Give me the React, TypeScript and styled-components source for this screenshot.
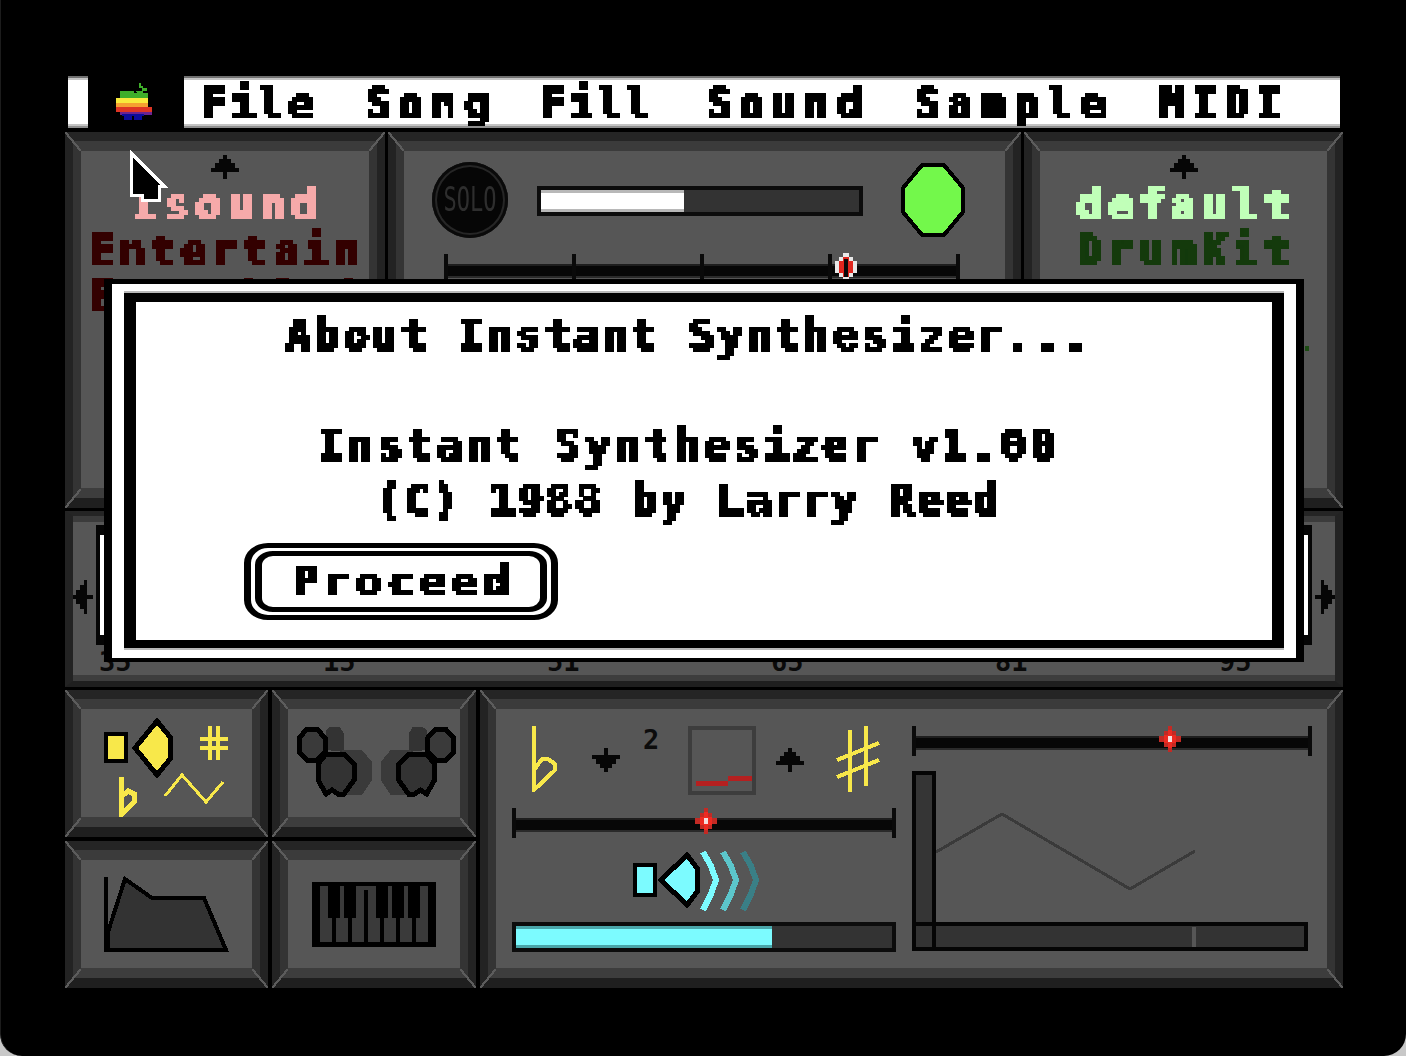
import React from "react";
import styled, { createGlobalStyle, css } from "styled-components";

const GlobalStyle = createGlobalStyle`
  html, body {
    margin: 0;
    padding: 0;
    background: #c8c8c8;
  }
  * { box-sizing: border-box; }
`;

const pixelFont = css`
  font-family: "DejaVu Sans Mono", "Liberation Mono", monospace;
  font-weight: 700;
  font-size: 42px;
  white-space: pre;
  filter: url(#chunky);
`;

const Screen = styled.div`
  position: relative;
  width: 1406px;
  height: 1056px;
  overflow: hidden;
  background: #000;
  border-left: 1px solid #1c1c1c;
  border-radius: 0 0 22px 22px;
  padding: 76px 63px 0 64px;
`;

const MenuBar = styled.div`
  display: flex;
  height: 52px;
  margin: 0 3px 4px;
`;

const MenuEdge = styled.div`
  background: #fff;
  border-top: 2px solid #707070;
  border-bottom: 2px solid #909090;
  box-shadow: inset 0 2px #c4c4c4, inset 0 -2px #c4c4c4;
`;

const MenuStub = styled(MenuEdge)`
  width: 20px;
`;

const AppleSlot = styled.div`
  width: 96px;
  display: flex;
  align-items: center;
  justify-content: center;
  padding-right: 4px;
  background: #000;
`;

const MenuItems = styled(MenuEdge)`
  flex: 1;
  display: flex;
  align-items: center;
  padding: 3px 0 0 17px;
`;

const MenuItem = styled.span<{ $ls: number; $w: number }>`
  ${pixelFont}
  flex: none;
  width: ${({ $w }) => $w}px;
  color: #000;
  line-height: 46px;
  letter-spacing: ${({ $ls }) => $ls}px;
`;

const TopRow = styled.div`
  display: grid;
  grid-template-columns: 320px 633px 319px;
  column-gap: 3px;
  height: 376px;
`;

const StripRow = styled.div`
  display: flex;
  height: 176px;
  margin-top: 3px;
`;

const BottomRow = styled.div`
  display: grid;
  grid-template-columns: 203px 204px 1fr;
  grid-template-rows: 147px 147px;
  column-gap: 4px;
  row-gap: 4px;
  height: 298px;
  margin-top: 3px;
`;

const Panel = styled.div<{ $strip?: boolean; $tall?: boolean }>`
  position: relative;
  display: flex;
  flex: 1;
  min-width: 0;
  border-style: solid;
  border-width: ${({ $strip }) => ($strip ? "5px 8px 6px" : "9px 8px 10px")};
  border-color: #252525 #232323 #1f1f1f #232323;
  ${({ $tall }) => $tall && "grid-row: 1 / span 2; grid-column: 3;"}
  ${({ $strip }) =>
    !$strip &&
    css`
      &::after {
        content: "";
        position: absolute;
        inset: -9px -8px -10px;
        pointer-events: none;
        background-repeat: no-repeat;
        background-size: 16px 19px;
        background-position: left top, right top, left bottom, right bottom;
        background-image:
          linear-gradient(to top right, transparent calc(50% - 1.1px), #5c5c5c calc(50% - 1.1px) calc(50% + 1.1px), transparent calc(50% + 1.1px)),
          linear-gradient(to top left, transparent calc(50% - 1.1px), #5c5c5c calc(50% - 1.1px) calc(50% + 1.1px), transparent calc(50% + 1.1px)),
          linear-gradient(to top left, transparent calc(50% - 1.1px), #5c5c5c calc(50% - 1.1px) calc(50% + 1.1px), transparent calc(50% + 1.1px)),
          linear-gradient(to top right, transparent calc(50% - 1.1px), #5c5c5c calc(50% - 1.1px) calc(50% + 1.1px), transparent calc(50% + 1.1px));
      }
    `}
`;

const Face = styled.div<{ $strip?: boolean }>`
  flex: 1;
  min-width: 0;
  background: #565656;
  border-style: solid;
  border-width: ${({ $strip }) => ($strip ? "6px 0 6px" : "10px 8px")};
  border-color: #3b3b3b #343434 #3d3d3d #343434;
`;

const ListFace = styled(Face)`
  display: flex;
  flex-direction: column;
  align-items: center;
  padding-top: 4px;
`;

const ListLine = styled.div<{ $color: string; $ls: number }>`
  ${pixelFont}
  color: ${({ $color }) => $color};
  letter-spacing: ${({ $ls }) => $ls}px;
  line-height: 46px;
  height: 46px;
`;

const ListLines = styled.div`
  margin: 3px 0 0 5px;
  display: flex;
  flex-direction: column;
  align-items: center;
`;

const Speck = styled.div`
  position: absolute;
  left: 1304px;
  top: 346px;
  width: 4px;
  height: 5px;
  background: #1b4a12;
`;

const TransportRow = styled.div`
  display: flex;
  align-items: center;
  padding: 11px 0 0 28px;
`;

const SoloButton = styled.div`
  flex: none;
  width: 76px;
  height: 76px;
  display: flex;
  align-items: center;
  justify-content: center;
  border-radius: 50%;
  background: #060606;
  box-shadow: inset 0 0 0 3px #0a0a0a, inset 0 0 0 5px #262626;
`;

const SoloLabel = styled.span`
  font-family: "DejaVu Sans Mono", monospace;
  font-size: 22px;
  line-height: 22px;
  color: #2e2e2e;
  transform: scaleY(1.5);
`;

const ProgressBar = styled.div<{ $w: number; $ml?: number; $mt?: number }>`
  width: ${({ $w }) => $w}px;
  height: 30px;
  margin-left: ${({ $ml }) => $ml ?? 0}px;
  margin-top: ${({ $mt }) => $mt ?? 0}px;
  border: 4px solid #0c0c0c;
  background: #333;
  overflow: hidden;
`;

const ProgressFill = styled.div<{ $color: string; $edge: string }>`
  height: 100%;
  background: ${({ $color }) => $color};
  box-shadow: inset 0 3px ${({ $edge }) => $edge}, inset 0 -3px ${({ $edge }) => $edge};
`;

const GoLight = styled.svg`
  display: block;
  margin-left: 37px;
`;

const SliderRoot = styled.div<{ $w: number; $ml?: number; $mt?: number }>`
  position: relative;
  display: flex;
  justify-content: space-between;
  width: ${({ $w }) => $w}px;
  height: 30px;
  margin-left: ${({ $ml }) => $ml ?? 0}px;
  margin-top: ${({ $mt }) => $mt ?? 0}px;
  &::before {
    content: "";
    position: absolute;
    left: 0;
    right: 0;
    top: 10px;
    height: 10px;
    background: #070707;
    border-top: 2px solid #1e1e1e;
    border-bottom: 2px solid #2a2a2a;
  }
`;

const SliderTick = styled.span`
  position: relative;
  width: 4px;
  background: #0a0a0a;
`;

const SliderThumb = styled.svg<{ $x: number }>`
  position: absolute;
  left: ${({ $x }) => $x}px;
  top: -2px;
`;

const StripFace = styled(Face)`
  display: flex;
  align-items: flex-start;
`;

const StripArrow = styled.div<{ $ml: number }>`
  margin: 58px 0 0 ${({ $ml }) => $ml}px;
  line-height: 0;
`;

const StripMiddle = styled.div`
  width: 1216px;
  margin: 3px 0 0 3px;
`;

const KeyFrame = styled.div`
  height: 120px;
  background: #fff;
  border: solid #050505;
  border-width: 10px 4px;
`;

const ScaleRow = styled.div`
  display: grid;
  grid-template-columns: repeat(6, 224px);
  padding: 4px 0 0 3px;
`;

const ScaleNum = styled.span`
  font-family: "DejaVu Sans Mono", monospace;
  font-weight: 700;
  font-size: 27px;
  line-height: 26px;
  color: #0a0a0a;
`;

const IconFace = styled(Face)`
  display: flex;
  align-items: center;
  justify-content: center;
`;

const ControlFace = styled(Face)`
  display: grid;
  grid-template-columns: 384px 400px;
  column-gap: 16px;
  padding: 17px 0 0 16px;
`;

const LeftColumn = styled.div`
  display: flex;
  flex-direction: column;
`;

const RightColumn = styled.div`
  display: flex;
  flex-direction: column;
`;

const PitchRow = styled.div`
  display: flex;
  align-items: flex-start;
  height: 70px;
`;

const PitchItem = styled.div<{ $ml: number; $mt?: number }>`
  margin-left: ${({ $ml }) => $ml}px;
  margin-top: ${({ $mt }) => $mt ?? 0}px;
  line-height: 0;
`;

const OctaveNum = styled.span`
  display: block;
  width: 14px;
  font-family: "DejaVu Sans Mono", monospace;
  font-weight: 700;
  font-size: 27px;
  line-height: 27px;
  color: #0c0c0c;
`;

const PitchBox = styled.div`
  display: flex;
  align-items: flex-end;
  width: 68px;
  height: 69px;
  padding: 0 0 5px 4px;
  border: 4px solid #3d3d3d;
`;

const PitchStep = styled.span<{ $w: number; $mb: number }>`
  width: ${({ $w }) => $w}px;
  height: 5px;
  margin-bottom: ${({ $mb }) => $mb}px;
  background: #b52020;
`;

const VolumeRow = styled.div`
  display: flex;
  margin: 12px 0 0 118px;
  height: 62px;
`;

const EnvelopeGraph = styled.svg`
  display: block;
  margin-top: 15px;
`;

const Dialog = styled.div`
  position: absolute;
  left: 103px;
  top: 279px;
  width: 1200px;
  height: 383px;
  background: #fff;
  border: solid #000;
  border-width: 5px 8px 4px;
  padding: 9px 12px 10px;
`;

const DialogInner = styled.div`
  height: 100%;
  background: #fff;
  border: solid #000;
  border-width: 9px 12px 8px;
  box-shadow: 0 -2px #b8b8b8, 0 2px #b8b8b8;
  display: flex;
  flex-direction: column;
  align-items: center;
  padding: 9px 30px 0 0;
`;

const DialogLine = styled.div<{ $ls: number; $mt?: number }>`
  ${pixelFont}
  color: #000;
  height: 50px;
  line-height: 50px;
  letter-spacing: ${({ $ls }) => $ls}px;
  margin-top: ${({ $mt }) => $mt ?? 0}px;
`;

const ProceedButton = styled.button`
  position: relative;
  align-self: flex-start;
  width: 314px;
  height: 77px;
  margin: 17px 0 0 108px;
  padding: 0;
  background: #fff;
  border: solid #000;
  border-width: 5px 7px;
  border-radius: 24px / 20px;
  display: flex;
  align-items: center;
  justify-content: center;
  &::before {
    content: "";
    position: absolute;
    inset: 3px 4px;
    border: solid #000;
    border-width: 5px 7px;
    border-radius: 18px / 14px;
  }
`;

const ProceedLabel = styled.span`
  ${pixelFont}
  color: #000;
  letter-spacing: 6.5px;
  line-height: 48px;
  margin-left: 6px;
`;

const Pointer = styled.svg`
  position: absolute;
  left: 124px;
  top: 148px;
`;

const ChunkyDefs = styled.svg`
  position: absolute;
  width: 0;
  height: 0;
`;

function Spade({ dir, w, h }: { dir: "up" | "down" | "left" | "right"; w: number; h: number }) {
  const side = dir === "left" || dir === "right";
  const t = { up: "", down: "translate(28 24) rotate(180)", right: "translate(24 0) rotate(90)", left: "translate(0 28) rotate(-90)" }[dir];
  return (
    <svg width={w} height={h} viewBox={side ? "0 0 24 28" : "0 0 28 24"} preserveAspectRatio="none" shapeRendering="crispEdges">
      <path transform={t} fill="#060606" d="M12 0h4v4h4v4h4v5h4v4H16v7h-4v-7H0v-4h4V8h4V4h4z" />
    </svg>
  );
}

function AppleLogo() {
  const rows: [number, number, number, number, string][] = [
    [120, 90, 14, 2, "#3fae2a"],
    [120, 92, 28, 5, "#3fae2a"],
    [116, 97, 32, 5, "#f8ea3c"],
    [116, 102, 32, 4, "#f6a030"],
    [116, 106, 36, 5, "#de3524"],
    [120, 111, 32, 3, "#6a2390"],
    [122, 113, 22, 2, "#0c0c9a"],
    [124, 114, 8, 5, "#0c0c9a"],
    [134, 114, 8, 5, "#0c0c9a"],
  ];
  return (
    <svg width={40} height={40} viewBox="114 81 40 40" shapeRendering="crispEdges">
      <path d="M136 90h6v-3h-3v-5h2v3h2v2h4v3h-4v3h-5z" fill="#3fae2a" />
      {rows.map(([x, y, w, h, c], i) => (
        <rect key={i} x={x} y={y} width={w} height={h} fill={c} />
      ))}
    </svg>
  );
}

function Thumb({ white }: { white?: boolean }) {
  if (white) {
    return (
      <g shapeRendering="crispEdges">
        <path d="M8 1h6v4h4v4h4v12h-4v4h-4v2H8v-2H4v-4H0V9h4V5h4z" fill="#e8e8e8" />
        <path d="M8 5h6v4h4v12h-4v4H8v-4H4V9h4z" fill="#e0261e" />
        <rect x="9" y="7" width="4" height="18" fill="#0a0a0a" />
      </g>
    );
  }
  return (
    <g shapeRendering="crispEdges">
      <path d="M9 2h4v5h4v5h5v6h-5v5h-4v5H9v-5H5v-5H0v-6h5V7h4z" fill="#c32a24" />
      <path d="M9 6h4v5h4v8h-4v5H9v-5H5v-8h4z" fill="#ee2a22" />
      <rect x="9" y="12" width="4" height="6" fill="#f6dcdc" />
    </g>
  );
}

function Slider({ w, ml, mt, ticks, x, white }: { w: number; ml?: number; mt?: number; ticks: number; x: number; white?: boolean }) {
  return (
    <SliderRoot $w={w} $ml={ml} $mt={mt}>
      {Array.from({ length: ticks }).map((_, i) => (
        <SliderTick key={i} />
      ))}
      <SliderThumb $x={x} width={22} height={30} viewBox="0 0 22 30">
        <Thumb white={white} />
      </SliderThumb>
    </SliderRoot>
  );
}

function Speaker({ fill }: { fill: string }) {
  return (
    <svg width={132} height={62} viewBox="630 850 132 62" shapeRendering="crispEdges">
      <rect x="635" y="865" width="20" height="30" fill={fill} stroke="#000" strokeWidth="4" />
      <path d="M661 880 L687 855 L697 868 V892 L687 905 Z" fill={fill} stroke="#000" strokeWidth="5" />
      <g fill="none" strokeWidth="6">
        <path d="M703 852L711 866L716 880L711 894L703 910" stroke="#7cfbff" />
        <path d="M723 852L731 866L736 880L731 894L723 910" stroke="#5cc6cb" />
        <path d="M743 852L751 866L756 880L751 894L743 910" stroke="#3a7f86" />
      </g>
    </svg>
  );
}

function WaveIcon() {
  const y = "#f8e84a";
  return (
    <svg width={171} height={108} viewBox="81 709 171 108" shapeRendering="crispEdges">
      <rect x="106" y="734" width="20" height="27" fill={y} stroke="#000" strokeWidth="4" />
      <path d="M135 748 L157 721 L170 737 V759 L157 775 Z" fill={y} stroke="#000" strokeWidth="5" />
      <g stroke={y} strokeWidth="4" fill="none">
        <path d="M210 726V760M218 726V760M200 739H228M200 748H228" />
        <path d="M121 777V815L134 802V794L128 791L121 797" strokeWidth="5" />
        <path d="M165 796L182 775L206 802L223 782" strokeWidth="3" />
      </g>
    </svg>
  );
}

function HandsIcon() {
  const hand = (
    <>
      <path d="M326 750V730L330 727H340L344 734V752Z" fill="#333" />
      <path d="M342 750H362L372 762V780L362 795H335Z" fill="#3a3a3a" />
      <path d="M299 738L307 729H317L325 738V752L317 760H307L299 752Z" fill="#3a3a3a" stroke="#000" strokeWidth="5" />
      <path d="M326 754H344L354 764V780L344 794H338L332 790L326 794L318 780V764Z" fill="#333" stroke="#000" strokeWidth="5" />
    </>
  );
  return (
    <svg width={172} height={108} viewBox="288 709 172 108" shapeRendering="crispEdges">
      {hand}
      <g transform="translate(752.6 0) scale(-1 1)">{hand}</g>
    </svg>
  );
}

function EnvelopeIcon() {
  return (
    <svg width={171} height={108} viewBox="81 860 171 108" shapeRendering="crispEdges">
      <path d="M108 950V932L125 879L152 898H204L226 950Z" fill="#333" stroke="#000" strokeWidth="4" />
      <rect x="104" y="877" width="4" height="75" fill="#000" />
      <rect x="104" y="948" width="124" height="4" fill="#000" />
    </svg>
  );
}

function KeyboardIcon() {
  const keys = [320, 336, 352, 368, 384, 400, 416];
  const blacks = [328, 344, 376, 392, 408];
  return (
    <svg width={172} height={108} viewBox="288 860 172 108" shapeRendering="crispEdges">
      <rect x="312" y="882" width="124" height="65" fill="#000" />
      {keys.map((x) => (
        <rect key={x} x={x} y="886" width="12" height="56" fill="#3a3a3a" />
      ))}
      <rect x="332" y="886" width="96" height="4" fill="#3a3a3a" />
      {blacks.map((x) => (
        <rect key={x} x={x} y="886" width="12" height="32" fill="#000" />
      ))}
    </svg>
  );
}

function Flat() {
  return (
    <svg width={25} height={66} viewBox="0 0 25 66">
      <path d="M2 0V64L23 44V38L16 33H10L2 44" fill="none" stroke="#f8e84a" strokeWidth="4" shapeRendering="crispEdges" />
    </svg>
  );
}

function Sharp() {
  return (
    <svg width={44} height={66} viewBox="836 726 44 66" shapeRendering="crispEdges">
      <path d="M850 730V792M866 726V786M837 760L879 743M837 777L879 760" fill="none" stroke="#f8e84a" strokeWidth="4" />
    </svg>
  );
}

function EnvelopeChart() {
  return (
    <EnvelopeGraph width={400} height={181} viewBox="912 772 400 181" shapeRendering="crispEdges">
      <path d="M936 853L1002 815L1130 890L1195 852" fill="none" stroke="#3a3a3a" strokeWidth="3" />
      <rect x="914" y="774" width="20" height="176" fill="#353535" stroke="#050505" strokeWidth="4" />
      <rect x="914" y="925" width="392" height="25" fill="#333" stroke="#050505" strokeWidth="4" />
      <path d="M934 925V950" stroke="#050505" strokeWidth="4" />
      <rect x="1192" y="928" width="4" height="20" fill="#565656" />
    </EnvelopeGraph>
  );
}

const menu = [
  { label: "File", ls: 3.7, w: 164 },
  { label: "Song", ls: 8, w: 175 },
  { label: "Fill", ls: 3.3, w: 166 },
  { label: "Sound", ls: 7.5, w: 208 },
  { label: "Sample", ls: 8, w: 246 },
  { label: "MIDI", ls: 7, w: 130 },
];

const scale = ["35", "15", "51", "65", "81", "95"];

export default function App() {
  return (
    <>
      <GlobalStyle />
      <ChunkyDefs aria-hidden="true">
        <defs>
          <filter id="chunky" x="-5%" y="-10%" width="110%" height="120%" colorInterpolationFilters="sRGB">
            <feMorphology in="SourceGraphic" operator="dilate" radius="1 0" result="fat" />
            <feComponentTransfer in="fat" result="hard">
              <feFuncA type="discrete" tableValues="0 1" />
            </feComponentTransfer>
            <feFlood x="1" y="2" width="1" height="1" floodColor="#000" />
            <feComposite width="4" height="4" />
            <feTile result="grid" />
            <feComposite in="hard" in2="grid" operator="in" />
            <feMorphology operator="dilate" radius="2 2" />
            <feGaussianBlur stdDeviation="0 0.5" />
          </filter>
        </defs>
      </ChunkyDefs>
      <Screen>
        <MenuBar>
          <MenuStub />
          <AppleSlot>
            <AppleLogo />
          </AppleSlot>
          <MenuItems>
            {menu.map((m) => (
              <MenuItem key={m.label} $ls={m.ls} $w={m.w}>
                {m.label}
              </MenuItem>
            ))}
          </MenuItems>
        </MenuBar>

        <TopRow>
          <Panel>
            <ListFace>
              <Spade dir="up" w={28} h={24} />
              <ListLines>
                <ListLine $color="#f6aaaa" $ls={6.7}>Isound</ListLine>
                <ListLine $color="#330000" $ls={5.5}>Entertain</ListLine>
                <ListLine $color="#330000" $ls={5.5}>Ensemble1</ListLine>
              </ListLines>
            </ListFace>
          </Panel>
          <Panel>
            <Face>
              <TransportRow>
                <SoloButton>
                  <SoloLabel>SOLO</SoloLabel>
                </SoloButton>
                <ProgressBar $w={326} $ml={29} $mt={2}>
                  <ProgressFill $color="#fff" $edge="#b8b8b8" style={{ width: "45%" }} />
                </ProgressBar>
                <GoLight width={66} height={76} viewBox="0 0 66 76" shapeRendering="crispEdges">
                  <path d="M22 3H44L63 26V50L44 73H22L3 50V26Z" fill="#73f84b" stroke="#000" strokeWidth="4" />
                </GoLight>
              </TransportRow>
              <Slider w={516} ml={40} mt={16} ticks={5} x={391} white />
            </Face>
          </Panel>
          <Panel>
            <ListFace>
              <Spade dir="up" w={28} h={24} />
              <ListLines>
                <ListLine $color="#c0ffb8" $ls={5.9}>default</ListLine>
                <ListLine $color="#143a0c" $ls={5.9}>DrumKit</ListLine>
              </ListLines>
            </ListFace>
          </Panel>
        </TopRow>

        <StripRow>
          <Panel $strip>
            <StripFace $strip>
              <StripArrow $ml={0}>
                <Spade dir="left" w={20} h={34} />
              </StripArrow>
              <StripMiddle>
                <KeyFrame />
                <ScaleRow>
                  {scale.map((n) => (
                    <ScaleNum key={n}>{n}</ScaleNum>
                  ))}
                </ScaleRow>
              </StripMiddle>
              <StripArrow $ml={3}>
                <Spade dir="right" w={20} h={34} />
              </StripArrow>
            </StripFace>
          </Panel>
        </StripRow>

        <BottomRow>
          <Panel>
            <IconFace>
              <WaveIcon />
            </IconFace>
          </Panel>
          <Panel>
            <IconFace>
              <HandsIcon />
            </IconFace>
          </Panel>
          <Panel $tall>
            <ControlFace>
              <LeftColumn>
                <PitchRow>
                  <PitchItem $ml={20}>
                    <Flat />
                  </PitchItem>
                  <PitchItem $ml={35} $mt={22}>
                    <Spade dir="down" w={28} h={24} />
                  </PitchItem>
                  <PitchItem $ml={23}>
                    <OctaveNum>2</OctaveNum>
                  </PitchItem>
                  <PitchItem $ml={31}>
                    <PitchBox>
                      <PitchStep $w={32} $mb={0} />
                      <PitchStep $w={24} $mb={5} />
                    </PitchBox>
                  </PitchItem>
                  <PitchItem $ml={20} $mt={22}>
                    <Spade dir="up" w={28} h={24} />
                  </PitchItem>
                  <PitchItem $ml={32}>
                    <Sharp />
                  </PitchItem>
                </PitchRow>
                <Slider w={384} mt={12} ticks={2} x={183} />
                <VolumeRow>
                  <Speaker fill="#7cfbff" />
                </VolumeRow>
                <ProgressBar $w={384} $mt={10}>
                  <ProgressFill $color="#7cfbff" $edge="#4aa6aa" style={{ width: "68%" }} />
                </ProgressBar>
              </LeftColumn>
              <RightColumn>
                <Slider w={400} ticks={2} x={247} />
                <EnvelopeChart />
              </RightColumn>
            </ControlFace>
          </Panel>
          <Panel>
            <IconFace>
              <EnvelopeIcon />
            </IconFace>
          </Panel>
          <Panel>
            <IconFace>
              <KeyboardIcon />
            </IconFace>
          </Panel>
        </BottomRow>

        <Speck />
        <Dialog>
          <DialogInner>
            <DialogLine $ls={3.5}>About Instant Synthesizer...</DialogLine>
            <DialogLine $ls={4.4} $mt={60}>Instant Synthesizer v1.00</DialogLine>
            <DialogLine $ls={3.2} $mt={5}>(C) 1988 by Larry Reed</DialogLine>
            <ProceedButton type="button">
              <ProceedLabel>Proceed</ProceedLabel>
            </ProceedButton>
          </DialogInner>
        </Dialog>
        <Pointer width={44} height={56} viewBox="124 148 44 56">
          <path d="M130 153L163 186H158V200H141V195H130Z" fill="#000" stroke="#fff" strokeWidth="3" shapeRendering="crispEdges" />
        </Pointer>
      </Screen>
    </>
  );
}
